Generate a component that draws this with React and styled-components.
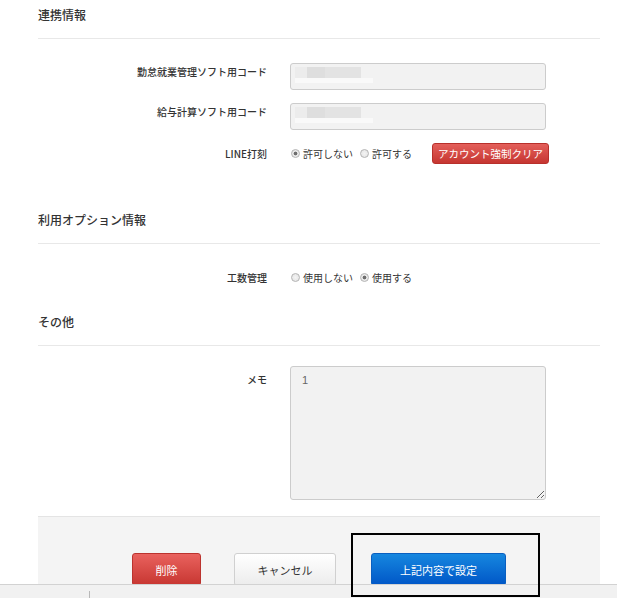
import React from 'react';
import styled, { createGlobalStyle } from 'styled-components';

const GlobalStyle = createGlobalStyle`
        html, body {
                margin: 0;
                padding: 0;
                background: #fff;
                overflow: hidden;
        }
        body {
                font-family: "Noto Sans CJK JP", "Noto Sans", sans-serif;
                color: #333;
        }
`;

const Page = styled.div`
        position: relative;
        width: 562px;
        padding-left: 38px;
        height: 598px;
        overflow: hidden;
`;

const Section = styled.section`
        padding-bottom: ${props => props.bottom || 0}px;
`;

const Heading = styled.h2`
        margin: 0;
        padding: 6px 0 14px;
        font-size: 12px;
        line-height: 18px;
        font-weight: 500;
        border-bottom: 1px solid #e8e8e8;
`;

const Body = styled.div`
        display: flex;
        flex-direction: column;
        gap: 13px;
        padding-top: ${props => props.top || 24}px;
`;

const Row = styled.div`
        display: flex;
        align-items: ${props => (props.center ? 'center' : 'flex-start')};
        min-height: 21px;
`;

const Label = styled.div`
        width: 229px;
        padding-top: ${props => props.offset || 0}px;
        text-align: right;
        font-size: 10px;
        line-height: 18px;
        font-weight: 500;
        flex-shrink: 0;
`;

const Control = styled.div`
        margin-left: 23px;
        display: flex;
        align-items: center;
`;

const FakeInput = styled.div`
        box-sizing: border-box;
        width: 256px;
        height: 27px;
        background: #f2f2f2;
        border: 1px solid #ccc;
        border-radius: 3px;
        padding: 3px 0 0 4px;
        display: flex;
        flex-direction: column;
`;

const Redacted = styled.span`
        width: ${props => props.w}px;
        height: ${props => props.h}px;
        background: ${props => props.bg};
        filter: blur(0.6px);
`;

const Memo = styled.textarea`
        box-sizing: border-box;
        width: 256px;
        height: 134px;
        background: #f2f2f2;
        border: 1px solid #ccc;
        border-radius: 3px;
        padding: 7px 11px;
        font-family: "Liberation Sans", Arial, sans-serif;
        font-size: 11px;
        color: #666;
        resize: both;
        outline: none;
`;

const RadioGroup = styled.label`
        display: flex;
        align-items: center;
        font-size: 10px;
        line-height: 18px;
        margin-right: ${props => props.gap || 6}px;
`;

const RadioDot = styled.span`
        box-sizing: border-box;
        width: 9px;
        height: 9px;
        margin: 0 3px 0 1px;
        border-radius: 50%;
        border: 1px solid #b4b4b4;
        background: radial-gradient(circle, ${props => (props.checked ? '#6e6e6e 0 1.6px, #e9e9e9 2.2px' : '#f4f4f4 0, #e2e2e2 100%')});
`;

const Button = styled.button`
        box-sizing: border-box;
        font-family: "Noto Sans CJK JP", sans-serif;
        font-size: ${props => props.size || 11}px;
        border-radius: 3px;
        cursor: pointer;
        padding: 0;
`;

const SmallRed = styled(Button)`
        margin-left: 14px;
        width: 117px;
        height: 21px;
        color: #fff;
        border: 1px solid #b8302b;
        background: linear-gradient(#e35f5a, #c63631);
`;

const Footer = styled.div`
        margin-top: 16px;
        background: #f4f4f4;
        border-top: 1px solid #e4e4e4;
        height: 82px;
        padding-top: 36px;
        box-sizing: border-box;
        display: flex;
        align-items: flex-start;
`;

const FooterButton = styled(Button)`
        width: ${props => props.w}px;
        height: 33px;
        margin-left: ${props => props.ml}px;
        font-size: 11px;
        color: ${props => (props.kind === 'plain' ? '#333' : '#fff')};
        border: 1px solid ${props =>
                props.kind === 'danger' ? '#bb332e' : props.kind === 'primary' ? '#0a5fc0' : '#d0d0d0'};
        background: ${props =>
                props.kind === 'danger'
                        ? 'linear-gradient(#e9625e, #c73631)'
                        : props.kind === 'primary'
                        ? 'linear-gradient(#1687df, #0056c7)'
                        : 'linear-gradient(#ffffff, #ececec)'};
`;

const StatusBar = styled.div`
        position: fixed;
        left: 0;
        right: 0;
        bottom: 0;
        height: 13px;
        background: #f1f1f1;
        border-top: 1px solid #d2d2d2;
        z-index: 2;
        &::before {
                content: '';
                position: absolute;
                left: 89px;
                top: 6px;
                width: 1px;
                height: 8px;
                background: #b8b8b8;
        }
`;

const Annotation = styled.div`
        position: absolute;
        left: 351px;
        top: 533px;
        width: 189px;
        height: 64px;
        box-sizing: border-box;
        border: 2px solid #000;
        z-index: 3;
        pointer-events: none;
`;

function Radios({ options, checked }) {
        return options.map((o, i) => (
                <RadioGroup key={o} gap={i === 0 ? 6 : 0}>
                        <RadioDot checked={i === checked} />
                        {o}
                </RadioGroup>
        ));
}

function CodeInput() {
        return (
                <FakeInput>
                        <Redacted w={66} h={11} bg="linear-gradient(90deg, #ececec 0 18%, #dedede 18% 45%, #e3e3e3 45% 100%)" />
                        <Redacted w={78} h={5} bg="#f9f9f9" />
                </FakeInput>
        );
}

export default function App() {
        return (
                <Page>
                        <GlobalStyle />
                        <Section bottom={41}>
                                <Heading>連携情報</Heading>
                                <Body top={24}>
                                        <Row>
                                                <Label>勤怠就業管理ソフト用コード</Label>
                                                <Control>
                                                        <CodeInput />
                                                </Control>
                                        </Row>
                                        <Row>
                                                <Label>給与計算ソフト用コード</Label>
                                                <Control>
                                                        <CodeInput />
                                                </Control>
                                        </Row>
                                        <Row center>
                                                <Label>LINE打刻</Label>
                                                <Control>
                                                        <Radios options={['許可しない', '許可する']} checked={0} />
                                                        <SmallRed size={10.5}>アカウント強制クリア</SmallRed>
                                                </Control>
                                        </Row>
                                </Body>
                        </Section>
                        <Section bottom={19}>
                                <Heading>利用オプション情報</Heading>
                                <Body top={23}>
                                        <Row center>
                                                <Label>工数管理</Label>
                                                <Control>
                                                        <Radios options={['使用しない', '使用する']} checked={1} />
                                                </Control>
                                        </Row>
                                </Body>
                        </Section>
                        <Section>
                                <Heading>その他</Heading>
                                <Body top={20}>
                                        <Row>
                                                <Label offset={5}>メモ</Label>
                                                <Control>
                                                        <Memo defaultValue="1" />
                                                </Control>
                                        </Row>
                                </Body>
                        </Section>
                        <Footer>
                                <FooterButton kind="danger" w={69} ml={94}>削除</FooterButton>
                                <FooterButton kind="plain" w={102} ml={33}>キャンセル</FooterButton>
                                <FooterButton kind="primary" w={135} ml={35}>上記内容で設定</FooterButton>
                        </Footer>
                        <Annotation />
                        <StatusBar />
                </Page>
        );
}
